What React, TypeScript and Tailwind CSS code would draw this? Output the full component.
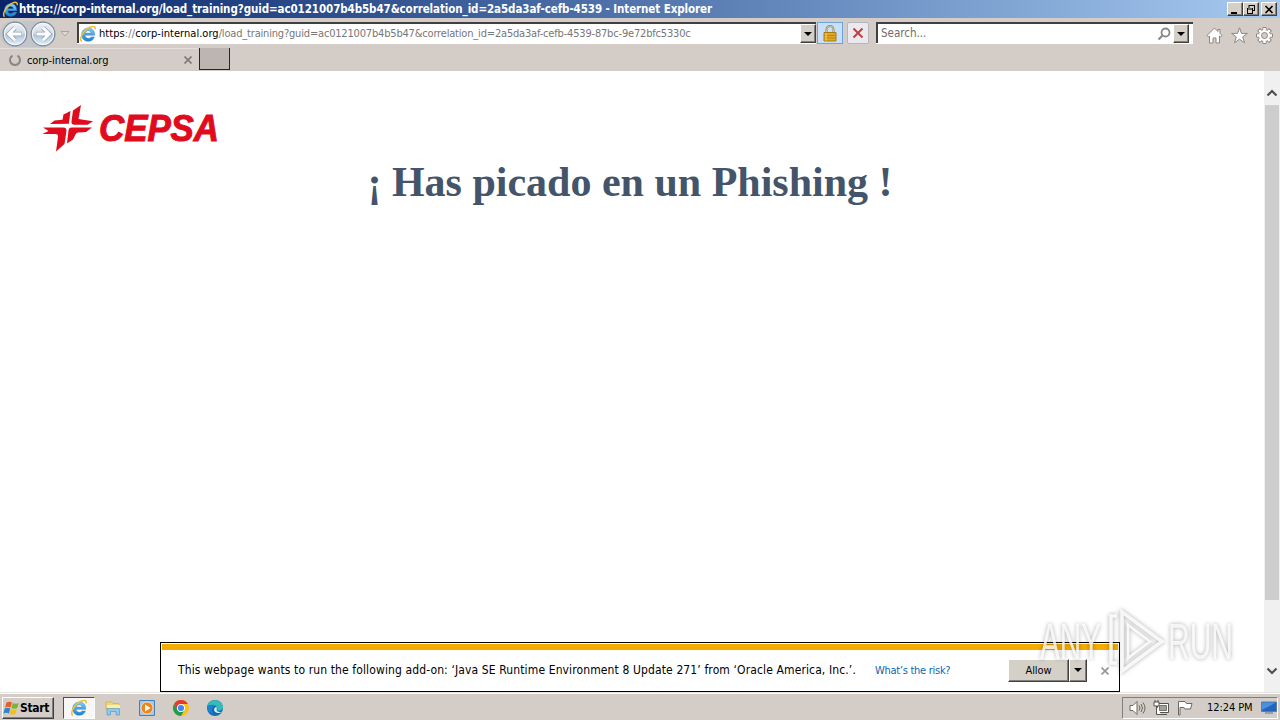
import { ReactNode, useId } from 'react'

interface IconProps {
  className?: string
}

const gearTeeth = [0, 45, 90, 135, 180, 225, 270, 315]

function IeIcon({ className }: IconProps) {
  const id = useId()
  return (
    <svg viewBox="0 0 18 18" className={className}>
      <defs>
        <linearGradient id={id} x1="0" y1="0" x2="0" y2="1">
          <stop offset="0" stopColor="#7fd0f7" />
          <stop offset="1" stopColor="#1b7fd0" />
        </linearGradient>
      </defs>
      <path
        d="M15.700 10.300H6c.2 2 1.500 3 3.400 3 1.300 0 2.200-.5 2.800-1.400h3.200c-.9 2.800-3.100 4.400-6 4.400-3.900 0-6.700-2.600-6.700-6.600 0-3.900 2.700-6.700 6.700-6.700 4.100 0 6.500 2.900 6.300 7.300zM6.200 8.100h5.900c-.2-1.500-1.300-2.400-2.900-2.400s-2.700.9-3 2.400z"
        fill={`url(#${id})`}
        stroke="#2b79bd"
        strokeWidth=".4"
      />
      <path
        d="M2.800 16.500C-.6 14.800 4.200 5.200 11 2.200c4-1.700 6-.6 5 2.300"
        fill="none"
        stroke="#f0c030"
        strokeWidth="1.500"
      />
    </svg>
  )
}

function NavArrow({ flip }: { flip?: boolean }) {
  const id = useId()
  return (
    <svg viewBox="0 0 26 26" className={flip ? 'size-[26px] -scale-x-100' : 'size-[26px]'}>
      <defs>
        <linearGradient id={id} x1="0" y1="0" x2="0" y2="1">
          <stop offset="0" stopColor="#f1f3f6" />
          <stop offset=".45" stopColor="#d3dce6" />
          <stop offset=".55" stopColor="#b4c6d9" />
          <stop offset="1" stopColor="#e3f3fa" />
        </linearGradient>
      </defs>
      <circle cx="13" cy="13" r="11.800" fill={`url(#${id})`} stroke="#7d8c9d" strokeWidth="1.200" />
      <circle cx="13" cy="13" r="10.600" fill="none" stroke="#f5f9fc" />
      <path
        d="M13 6.800 6.800 13l6.200 6.200M7.500 13H20"
        fill="none"
        stroke="#94a8bf"
        strokeWidth="4.600"
      />
      <path
        d="M13 6.800 6.800 13l6.200 6.200M7.500 13h12"
        fill="none"
        stroke="#fff"
        strokeWidth="3"
      />
    </svg>
  )
}

function DropButton({ className }: IconProps) {
  return (
    <span
      className={`flex items-center justify-center border border-t-white border-l-white border-r-[#404040] border-b-[#404040] bg-[#d4d0c8] shadow-[inset_-1px_-1px_#808080] ${className}`}
    >
      <svg viewBox="0 0 8 4" className="h-1 w-2">
        <path d="M0 0h8L4 4z" />
      </svg>
    </span>
  )
}

function CaptionButton({ children }: { children: ReactNode }) {
  return (
    <span className="flex h-[14px] w-4 items-center justify-center border border-t-white border-l-white border-r-[#404040] border-b-[#404040] bg-[#d4d0c8] shadow-[inset_-1px_-1px_#808080]">
      <svg viewBox="0 0 12 11" className="h-[11px] w-3" fill="none" stroke="#000">
        {children}
      </svg>
    </span>
  )
}

function TitleBar() {
  return (
    <div className="flex h-[18px] items-center bg-linear-to-r from-[#0a246a] to-[#a6caf0] pr-[3px] pl-[2px]">
      <IeIcon className="size-[17px]" />
      <span className="w-[1209px] text-[11.500px] leading-[18px] font-bold tracking-[-0.090px] whitespace-nowrap text-white">
        https://corp-internal.org/load_training?guid=ac0121007b4b5b47&amp;correlation_id=2a5da3af-cefb-4539
        - Internet Explorer
      </span>
      <div className="flex">
        <CaptionButton>
          <path d="M2 9h6" strokeWidth="2" />
        </CaptionButton>
        <CaptionButton>
          <path d="M4 1.500h6M4 1v3M9.500 1v6M7 6.500h3M2 5h6M2.500 4v6M7.500 4v6M2 9.500h6" />
        </CaptionButton>
        <span className="w-[2px]" />
        <CaptionButton>
          <path d="m2.500 2 7 7m0-7-7 7" strokeWidth="1.600" />
        </CaptionButton>
      </div>
    </div>
  )
}

function Toolbar() {
  return (
    <div className="flex h-[30px] items-start pt-[3px]">
      <div className="flex h-[26px] w-[56px] justify-between rounded-full bg-[#c3c5ca] pl-[2px]">
        <NavArrow />
        <NavArrow flip />
      </div>
      <svg viewBox="0 0 10 6" className="mt-[10px] ml-1 h-[6px] w-[10px]">
        <path d="M1 .5h8l-4 4.500z" fill="#dedad4" stroke="#aaa49c" />
      </svg>
      <div className="mt-[1px] ml-[7px] flex h-[21px] w-[739px] items-center border-t-2 border-l-2 border-[#404040] bg-white shadow-[0_1px_#fff]">
        <IeIcon className="size-[18px]" />
        <span className="ml-[2px] grow pt-[2px] text-[11px] tracking-[-0.180px] whitespace-nowrap text-[#777]">
          <span className="tracking-[0.040px] text-black">https</span>
          <span className="tracking-[0.200px]">://</span>
          <span className="tracking-[0.040px] text-black">corp-internal.org</span>
          /load_training?guid=ac0121007b4b5b47&amp;correlation_id=2a5da3af-cefb-4539-87bc-9e72bfc5330c
        </span>
        <DropButton className="h-[19px] w-4" />
      </div>
      <span className="mt-px ml-[1px] flex h-[22px] w-[26px] items-center justify-center border border-[#6ca4e0] bg-[#c8e0fa]">
        <svg viewBox="0 0 14 17" className="h-[17px] w-[14px]">
          <path d="M3.500 8V4.500a3.500 3.500 0 0 1 7 0V8" fill="none" stroke="#8d8260" strokeWidth="2" />
          <path d="M3.500 8V4.500a3.500 3.500 0 0 1 7 0V8" fill="none" stroke="#e3dcba" strokeWidth=".7" />
          <path d="M1 7.500h12v8.500H1z" fill="#e0a921" stroke="#a97a13" />
          <path d="M1.500 10.500h11m-11 2.500h11" stroke="#b78518" />
          <path d="M3 8v7.500" stroke="#f8d66a" />
        </svg>
      </span>
      <span className="mt-px ml-1 flex h-[22px] w-[22px] items-center justify-center rounded-xs border border-[#b5b5bd] bg-[#ebe9ed]">
        <svg viewBox="0 0 12 12" className="size-3">
          <path d="m1.500 1.500 9 9m0-9-9 9" stroke="#bd4048" strokeWidth="2" />
        </svg>
      </span>
      <div className="mt-px ml-[7px] flex h-[21px] w-[317px] items-center border-t-2 border-l-2 border-[#404040] bg-white pr-[4px] shadow-[0_1px_#fff]">
        <span className="ml-[3px] grow pt-px text-[11.500px] text-[#6d6d6d]">Search...</span>
        <svg viewBox="0 0 14 14" className="mr-[2px] size-[14px]" fill="none" stroke="#888">
          <circle cx="8.500" cy="5.500" r="4" strokeWidth="1.800" />
          <path d="M5.500 8.500 1.500 12.500" strokeWidth="2.200" />
        </svg>
        <DropButton className="h-[19px] w-4" />
      </div>
      <div className="mt-[6px] ml-[13px] flex gap-[8px]">
        <svg viewBox="0 0 17 17" className="size-[17px]">
          <path
            d="M8.500 1 1 8.500l1.500 1.300L3.500 9v7H7v-5h3v5h3.500V9l1 .8L16 8.500l-2-2V2.500h-2V4.500z"
            fill="#fff"
            stroke="#8c8780"
          />
        </svg>
        <svg viewBox="0 0 17 17" className="size-[17px]">
          <path
            d="m8.500.8 2 5.600h5.900l-4.700 3.500 1.800 5.900-5-3.600-5 3.600 1.800-5.900L.6 6.400h5.900z"
            fill="#fff"
            stroke="#8c8780"
          />
        </svg>
        <svg viewBox="0 0 17 17" className="size-[17px]">
          {gearTeeth.map((deg) => (
            <path
              key={deg}
              d="M6.900.5h3.200v4H6.900z"
              fill="#fff"
              stroke="#8c8780"
              transform={`rotate(${deg} 8.500 8.500)`}
            />
          ))}
          <circle cx="8.500" cy="8.500" r="5.900" fill="#fff" stroke="#8c8780" strokeWidth=".6" />
          {gearTeeth.map((deg) => (
            <path
              key={deg}
              d="M7.400 1.200h2.200v3H7.400z"
              fill="#fff"
              transform={`rotate(${deg} 8.500 8.500)`}
            />
          ))}
          <circle cx="8.500" cy="8.500" r="3" fill="#d4cdc7" stroke="#8c8780" />
        </svg>
      </div>
    </div>
  )
}

function TabRow() {
  return (
    <div className="flex h-[23px]">
      <div className="flex w-[199px] items-center border-t border-[#e4dfda] pr-[7px] pl-[9px]">
        <svg viewBox="0 0 12 12" className="size-3">
          <path d="M3.500 1.700a5 5 0 1 0 5 0" fill="none" stroke="#8a8683" strokeWidth="2" />
        </svg>
        <span className="ml-[6px] grow pt-[2px] text-[11px] tracking-[-0.080px]">corp-internal.org</span>
        <svg viewBox="0 0 8 8" className="size-2">
          <path d="m.5.5 7 7m0-7-7 7" stroke="#817b77" strokeWidth="1.700" />
        </svg>
      </div>
      <div className="h-[22px] w-[31px] border-r border-b border-l border-[#292524] bg-[#bcb5b1]" />
    </div>
  )
}

function CepsaLogo() {
  return (
    <svg viewBox="0 0 180 50" className="h-[50px] w-[180px]" fill="#e00b1c">
      <path d="M39 2 36.500 16 51 18.300l-5.500 3.400H32.500c-2.500 0-3.300-1.200-3-3.200L31 7.500z" />
      <path d="M21.500 11.500 28.500 8 26.800 20.800 8 21l4.500-3.500 8-.8z" />
      <path d="M1 24.500h20c2.800 0 3.800 1.600 3.400 4L22.500 41 14 48.500l2-14.500c.3-2-.5-3-2.500-3H.5l6-3z" />
      <path d="M29.500 24.500H50l-6 4.600-7 .3c-2 0-2.700.6-3.500 2l-2.500 5-6 4 1.500-13c.3-2 1.300-2.900 3-2.900z" />
      <text
        x="57"
        y="37.500"
        fontFamily="Liberation Sans, sans-serif"
        fontSize="36"
        fontWeight="bold"
        fontStyle="italic"
        textLength="120"
        lengthAdjust="spacingAndGlyphs"
        stroke="#e00b1c"
        strokeWidth="1"
      >
        CEPSA
      </text>
    </svg>
  )
}

function ScrollBar() {
  return (
    <div className="flex w-4 flex-col items-center bg-[#f0f0f0]">
      <svg viewBox="0 0 12 8" className="mt-[18px] h-2 w-3">
        <path d="m1.500 6.500 4.500-4.500 4.500 4.500" fill="none" stroke="#505050" strokeWidth="2.200" />
      </svg>
      <div className="mt-[8px] h-[495px] w-[14px] bg-[#cdcdcd]" />
      <svg viewBox="0 0 12 8" className="mt-[67px] h-2 w-3">
        <path d="m1.500 1.500 4.500 4.500 4.500-4.500" fill="none" stroke="#505050" strokeWidth="2.200" />
      </svg>
    </div>
  )
}

function AddOnBar() {
  return (
    <div className="absolute top-[642px] left-[160px] h-[50px] w-[960px] border border-black bg-white p-px">
      <div className="h-[6px] bg-[#f5ab00]" />
      <div className="flex h-[40px] items-center pl-4 text-[12px]">
        <span className="w-[697px] tracking-[0.120px] whitespace-nowrap">
          This webpage wants to run the following add-on: ‘Java SE Runtime Environment 8 Update 271’ from
          ‘Oracle America, Inc.’.
        </span>
        <span className="w-[133px] pt-[2px] text-[11px] tracking-[-0.280px] text-[#0f63b0]">What’s the risk?</span>
        <span className="flex h-[23px] w-[61px] items-center justify-center border border-t-white border-l-white border-r-[#404040] border-b-[#404040] bg-[#d4d0c8] pt-[2px] text-[11px] tracking-[-0.100px] shadow-[inset_-1px_-1px_#808080]">
          Allow
        </span>
        <DropButton className="h-[23px] w-[18px]" />
        <svg viewBox="0 0 8 8" className="mt-[2px] ml-[14px] size-2">
          <path d="m.5.5 7 7m0-7-7 7" stroke="#969696" strokeWidth="1.700" />
        </svg>
      </div>
    </div>
  )
}

function Watermark() {
  return (
    <svg
      viewBox="0 0 220 80"
      className="absolute top-[605px] left-[1036px] h-[80px] w-[220px] drop-shadow-[0_0_2px_rgba(0,0,0,0.400)]"
      fill="#fff"
      fillOpacity=".8"
      fontFamily="Liberation Sans, sans-serif"
      fontSize="50"
    >
      <text x="4" y="54" textLength="61" lengthAdjust="spacingAndGlyphs">
        ANY
      </text>
      <text x="132" y="54" textLength="65" lengthAdjust="spacingAndGlyphs">
        RUN
      </text>
      <g fill="none" stroke="#fff" strokeOpacity=".85" strokeWidth="3.500">
        <path d="M81 11h-6v47h6" />
        <path d="M86 7v59l40-29.500z" />
        <path d="M92 20v33l22-16.500z" strokeWidth="2.500" />
      </g>
    </svg>
  )
}

function TaskBar() {
  return (
    <div className="flex h-7 items-center border-t border-[#e7e4df] bg-[#d4cdc7] pt-[2px] shadow-[inset_0_1px_#fff]">
      <div className="ml-[2px] flex h-[22px] w-[52px] items-center border border-t-white border-l-white border-r-[#404040] border-b-[#404040] shadow-[inset_-1px_-1px_#808080]">
        <svg viewBox="0 0 17 16" className="h-4 w-[17px]">
          <path d="M3.500 2.500c2-1 4-1 5.500 0L7.500 7.500c-2-1-3.500-.8-5.500 0z" fill="#e95d24" />
          <path d="M9.800 3c2 1 4 1 6 0l-1.500 5c-2 .9-4 .9-6 0z" fill="#79b637" />
          <path d="M1.800 8.500c2-1 3.500-1 5.500 0l-1.400 5c-2-1-3.500-1-5.500 0z" fill="#2f84cf" />
          <path d="M8 9c2 1 4 1 6 0l-1.500 5c-2 .9-4 .9-6 0z" fill="#f6bd20" />
        </svg>
        <span className="text-[12px] font-bold tracking-[-0.300px]">Start</span>
      </div>
      <div className="ml-[9px] flex h-[22px] w-[32px] items-center justify-center border border-t-[#505050] border-l-[#505050] border-r-white border-b-white bg-[#f8f7f6]">
        <IeIcon className="size-[18px]" />
      </div>
      <svg viewBox="0 0 16 16" className="ml-[10px] size-4">
        <path d="M1 2h6l1 1.500h6V9H1z" fill="#efd67c" stroke="#c6a64b" strokeWidth=".6" />
        <path d="M2 5h13v4H2z" fill="#faedb0" />
        <path d="M2 15V8.500h12.500V15H11v-3.500H5.500V15z" fill="#8fc8e8" stroke="#589cc2" strokeWidth=".7" />
      </svg>
      <svg viewBox="0 0 16 16" className="ml-[18px] size-4">
        <path d="M.5.5h15v15H.5z" fill="#9fc8ec" stroke="#447fb8" />
        <circle cx="8" cy="8" r="6" fill="#f08418" stroke="#fff3da" strokeWidth=".7" />
        <path d="m6 4.500 5.500 3.500L6 11.500z" fill="#fff" />
      </svg>
      <svg viewBox="0 0 16 16" className="ml-[18px] size-4">
        <circle cx="8" cy="8" r="8" fill="#fbc116" />
        <path d="M8 8 4.500 10 1.070 4A8 8 0 0 1 14.930 4H8z" fill="#e33b2e" />
        <path d="M1.070 4A8 8 0 0 0 8 16l3.500-6H4.500z" fill="#229b4b" />
        <circle cx="8" cy="8" r="4" fill="#fff" />
        <circle cx="8" cy="8" r="3.100" fill="#4285f4" />
      </svg>
      <svg viewBox="0 0 16 16" className="ml-[18px] size-4">
        <circle cx="8" cy="8" r="8" fill="#1269b8" />
        <path d="M.5 6C2-1.500 14-2 16 6.500c.3 3.500-3.500 5-6 3.800C11.500 7.500 9 5 5.500 5 3 5 1 5.500.5 6z" fill="#35bdb5" />
        <path d="M15 11.500c-2 1-5.200.5-5.200-1.200C9 9.500 10.500 8.500 9.500 7c-2 0-3.500 3-1.200 5 2 1.600 5 1.200 6.700-.5z" fill="#d5eef4" />
        <path d="M.3 8C1 4 6.500 4 9 6.500 5 5.500 3.500 10 6.500 14c-4-1-6.200-3-6.200-6z" fill="#1b83d0" />
      </svg>
      <div className="mr-[2px] ml-auto flex h-[22px] w-[156px] items-center border border-t-[#808080] border-l-[#808080] border-r-white border-b-white pl-[6px]">
        <svg viewBox="0 0 17 16" className="h-4 w-[17px]" fill="none" stroke="#6a6764">
          <path d="M1 5.500h3l4-4v13l-4-4H1z" fill="#fff" />
          <path d="M10 5.500q2 2.500 0 5M12 4q3 4 0 8M14 2.500q4 5.500 0 11" />
        </svg>
        <svg viewBox="0 0 16 16" className="ml-[7px] size-4">
          <path d="M4.500 3.500h11v9h-11z" fill="#fff" stroke="#55524f" />
          <path d="M6.500 5.500h7v5h-7z" fill="#a3a09c" stroke="#77746f" />
          <path d="M7 14.500h7" fill="none" stroke="#55524f" />
          <path d="M1 2h5v4H1zM3.500 6v8.500H8M2 0v2m3-2v2" fill="#fff" stroke="#55524f" />
        </svg>
        <svg viewBox="0 0 16 16" className="ml-[8px] size-4">
          <path d="M1.500 1.500H8l1.500 2H15L13.500 9H8L7 7.500H3V15H1.500z" fill="#fff" stroke="#6a6764" />
        </svg>
        <span className="ml-[14px] w-[54px] pt-px text-[11px] tracking-[-0.080px] whitespace-nowrap">12:24 PM</span>
        <svg viewBox="0 0 16 13" className="h-[13px] w-4">
          <path d="M.5 1h15v9.500H.5z" fill="#2265bd" stroke="#547eb0" />
          <path d="M1 1.500h14L1 9z" fill="#4a90dc" />
          <path d="M4 12h8" stroke="#50749b" />
        </svg>
      </div>
    </div>
  )
}

export default function App() {
  return (
    <div className="relative flex h-[720px] w-[1280px] flex-col overflow-hidden bg-[#d4cdc7] font-['DejaVu_Sans_Condensed','DejaVu_Sans',sans-serif] [font-stretch:condensed] text-black">
      <TitleBar />
      <Toolbar />
      <TabRow />
      <div className="flex h-[621px] bg-white">
        <main className="w-[1264px] pt-[32px]">
          <div className="pl-[42px]">
            <CepsaLogo />
          </div>
          <h1 className="mt-[5px] w-[1260px] text-center font-['Liberation_Serif',serif] text-[42px] leading-[48px] font-bold text-[#44546a]">
            ¡ Has picado en un Phishing !
          </h1>
        </main>
        <ScrollBar />
      </div>
      <TaskBar />
      <AddOnBar />
      <Watermark />
    </div>
  )
}
